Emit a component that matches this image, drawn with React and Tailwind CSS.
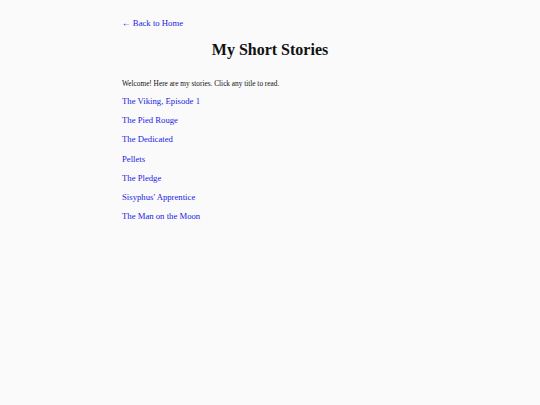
import React from "react";

const stories = [
  "The Viking, Episode 1",
  "The Pied Rouge",
  "The Dedicated",
  "Pellets",
  "The Pledge",
  "Sisyphus' Apprentice",
  "The Man on the Moon",
];

export default function App() {
  return (
    <div className="min-h-screen w-full bg-[#fafafa] text-[#111] font-['Liberation_Serif',Georgia,serif]">
      <div className="mx-auto w-[296px] pt-[17px]">
        <a href="#" className="text-[8.7px] text-[#1a1ae6] no-underline leading-[12px] block">
          ← Back to Home
        </a>
        <h1 className="mt-[11px] text-center text-[16px] font-bold leading-[20px]">My Short Stories</h1>
        <p className="mt-[19px] text-[7.3px] leading-[9px]">
          Welcome! Here are my stories. Click any title to read.
        </p>
        <ul className="mt-[7px] flex flex-col">
          {stories.map((s) => (
            <li key={s} className="h-[19.2px]">
              <a href="#" className="block text-[8.7px] leading-[12px] text-[#1a1ae6]">
                {s}
              </a>
            </li>
          ))}
        </ul>
      </div>
    </div>
  );
}
